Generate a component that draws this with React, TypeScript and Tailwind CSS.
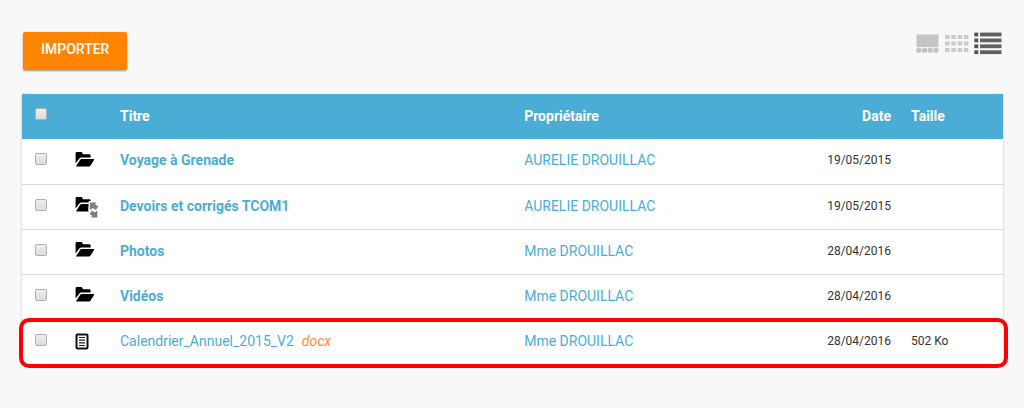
import React from "react";

type Kind = "folder" | "shared" | "document";

interface Entry {
  id: string;
  kind: Kind;
  title: string;
  ext?: string;
  owner: string;
  date: string;
  size?: string;
}

const entries: Entry[] = [
  { id: "voyage", kind: "folder", title: "Voyage à Grenade", owner: "AURELIE DROUILLAC", date: "19/05/2015" },
  { id: "devoirs", kind: "shared", title: "Devoirs et corrigés TCOM1", owner: "AURELIE DROUILLAC", date: "19/05/2015" },
  { id: "photos", kind: "folder", title: "Photos", owner: "Mme DROUILLAC", date: "28/04/2016" },
  { id: "videos", kind: "folder", title: "Vidéos", owner: "Mme DROUILLAC", date: "28/04/2016" },
  { id: "calendrier", kind: "document", title: "Calendrier_Annuel_2015_V2", ext: "docx", owner: "Mme DROUILLAC", date: "28/04/2016", size: "502 Ko" },
];

function EntryIcon({ kind }: { kind: Kind }) {
  if (kind === "document") {
    return (
      <svg width="14" height="18" viewBox="0 0 14 18" aria-hidden="true">
        <rect x="1.5" y="1.5" width="11" height="14" rx="1" fill="#fff" stroke="#111" strokeWidth="2" />
        <path d="M4 4.5h6M4 7.2h6M4 9.8h6M4 12.5h6" stroke="#222" strokeWidth="1.2" />
      </svg>
    );
  }
  return (
    <svg width="24" height="23" viewBox="0 0 24 23" aria-hidden="true">
      <path d="M0.6 13.6V3.2Q0.6 2 1.8 2H6.2Q7.3 2 7.5 3.2L7.8 4.2H14.4Q15.6 4.2 15.6 5.4V7.5H6.6Q5 7.5 4 8.9Z" fill="#000" />
      <path d="M1 16.2L5 9.9Q5.6 9 6.8 9H18.6Q19.6 9 19 10L15.6 15.4Q15 16.4 13.8 16.4H1.8Q1.2 16.4 1 16.2Z" fill="#000" />
      {kind === "shared" && (
        <g>
          <path d="M13.8 6H24V23H14V17.5L13.2 15.5Z" fill="#fff" />
          <path d="M14.8 7.5H21.4L20.2 9.2L23.4 11.4L20.8 15L17.6 12.9L16.2 14.6H14.8Z" fill="#808080" />
          <path d="M22.4 22.6H16L17.2 20.9L14.6 19.1L17 15.6L20 17.6L21.2 15.9H22.4Z" fill="#808080" />
        </g>
      )}
    </svg>
  );
}

const checkbox =
  "block size-3 appearance-none rounded-[2px] border border-[#b0b0b0] bg-linear-to-b from-[#eeeeee] to-[#dcdcdc] checked:bg-[#4badd6] checked:bg-none";

function ViewSwitch() {
  return (
    <div className="flex items-start gap-[5px] pr-px" role="group" aria-label="Affichage">
      <button type="button" aria-label="Vue galerie" className="pt-[2px]">
        <svg width="24" height="20" viewBox="0 0 24 20" fill="#c5c5c5">
          <rect x="0.5" y="0.5" width="22" height="12.5" />
          <circle cx="2.9" cy="16.3" r="2.7" />
          <circle cx="8.5" cy="16.3" r="2.7" />
          <circle cx="14.2" cy="16.3" r="2.7" />
          <circle cx="19.9" cy="16.3" r="2.7" />
        </svg>
      </button>
      <button type="button" aria-label="Vue grille" className="pt-[3px]">
        <svg width="24" height="18" viewBox="0 0 24 18" fill="#cbcbcb">
          {[0, 6.5, 13].map((y) =>
            [0, 6.3, 12.6, 18.9].map((x) => <rect key={`${x}-${y}`} x={x} y={y} width="4.5" height="4" />)
          )}
        </svg>
      </button>
      <button type="button" aria-label="Vue liste" aria-pressed="true">
        <svg width="28" height="23" viewBox="0 0 28 23" fill="#606060">
          {[0.6, 6.5, 12.4, 18.3].map((y) => (
            <g key={y}>
              <rect x="0.3" y={y} width="4" height="3.8" fill="#55505a" />
              <rect x="6" y={y} width="21.5" height="3.8" />
            </g>
          ))}
        </svg>
      </button>
    </div>
  );
}

export default function App() {
  return (
    <main className="min-h-screen bg-[#f8f8f8] pt-8 pr-[21px] pb-10 pl-[22px] font-[Roboto,sans-serif] text-sm text-[#333]">
      <div className="flex items-start justify-between">
        <button
          type="button"
          className="ml-px h-[38px] rounded-[2px] bg-[#ff8500] px-[18px] pb-1 text-sm font-medium text-white shadow-[0_1px_2px_rgba(0,0,0,0.4)]"
        >
          IMPORTER
        </button>
        <ViewSwitch />
      </div>

      <div className="relative mt-6">
        <table className="w-full table-fixed border-collapse bg-white shadow-[0_1px_2px_rgba(0,0,0,0.25)]">
          <colgroup>
            <col className="w-[53px]" />
            <col className="w-[45px]" />
            <col className="w-[41.2%]" />
            <col />
            <col className="w-[94px]" />
            <col className="w-[102px]" />
          </colgroup>
          <thead>
            <tr className="h-[45px] bg-[#4badd6] text-left text-white">
              <th className="pb-1.5 pl-[13px]">
                <input type="checkbox" aria-label="Tout sélectionner" className={checkbox} />
              </th>
              <td />
              <th className="pb-0.5 font-bold">Titre</th>
              <th className="pb-0.5 font-bold">Propriétaire</th>
              <th className="pr-[10px] pb-0.5 text-right font-bold">Date</th>
              <th className="pb-0.5 pl-[10px] font-bold">Taille</th>
            </tr>
          </thead>
          <tbody>
            {entries.map((e) => (
              <tr key={e.id} className="h-[45px] border-b border-[#d9d9d9]">
                <td className="pb-1 pl-[13px]">
                  <input type="checkbox" aria-label={e.title} className={checkbox} />
                </td>
                <td>
                  <div className="flex">
                    <EntryIcon kind={e.kind} />
                  </div>
                </td>
                <td className="pb-0.5">
                  <a href={`#${e.id}`} className={e.kind === "document" ? "text-[#4badd6]" : "font-bold text-[#4badd6]"}>
                    {e.title}
                  </a>
                  {e.ext && <em className="ml-2 text-[#ff8a3c]">{e.ext}</em>}
                </td>
                <td className="pb-0.5">
                  <a href={`#auteur-${e.id}`} className="text-[#4badd6]">
                    {e.owner}
                  </a>
                </td>
                <td className="pr-[10px] pb-0.5 text-right text-xs">{e.date}</td>
                <td className="pb-0.5 pl-[10px] text-xs">{e.size}</td>
              </tr>
            ))}
          </tbody>
        </table>
        <div className="pointer-events-none absolute -right-[5px] -bottom-[3px] -left-[3px] h-[50px] rounded-[10px] border-4 border-[#ff0000]" />
      </div>
    </main>
  );
}
